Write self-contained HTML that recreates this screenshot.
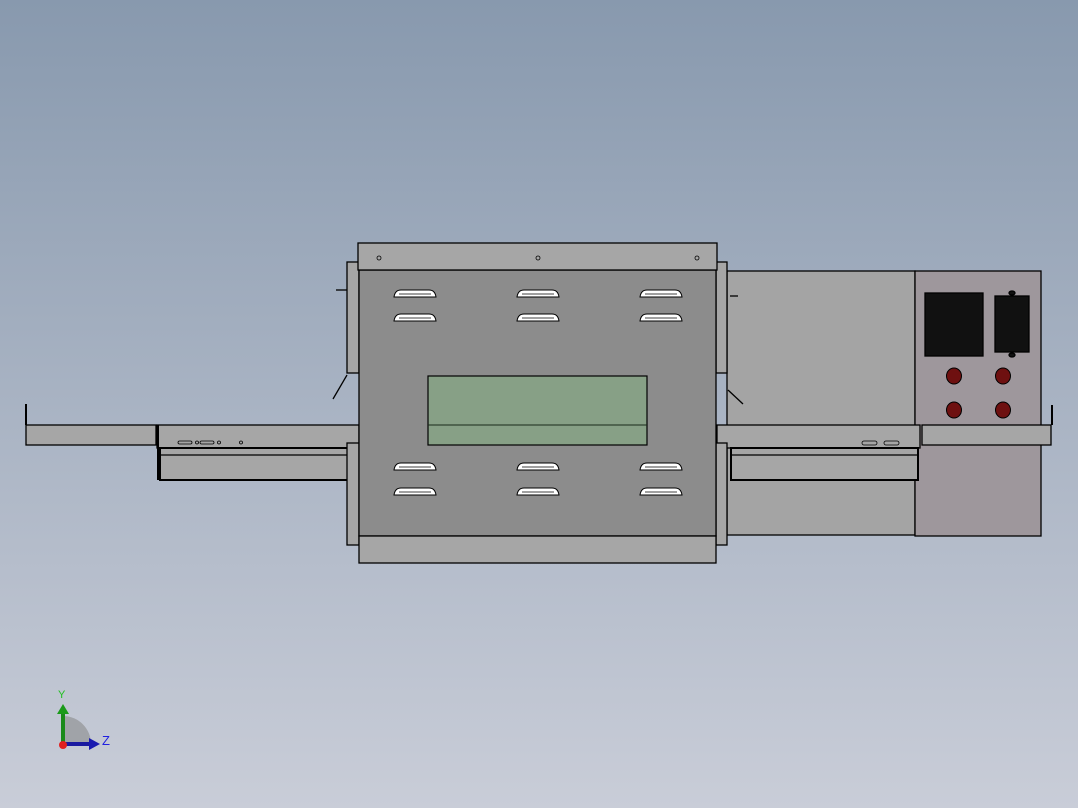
<!DOCTYPE html><html><head><style>body{margin:0}svg{display:block}</style></head><body>
<svg width="1078" height="808" xmlns="http://www.w3.org/2000/svg" font-family="Liberation Sans, sans-serif">
<defs><linearGradient id="bg" x1="0" y1="0" x2="0" y2="1"><stop offset="0" stop-color="#8899ae"/><stop offset="1" stop-color="#c9cdd8"/></linearGradient>
<g id="slot"><path d="M-21 4 Q-20 -3 -14 -3 L14 -3 Q20 -3 21 4 Z" fill="#fff" stroke="#000" stroke-width="1"/><line x1="-16" y1="1" x2="16" y2="1" stroke="#000" stroke-width="0.7"/></g></defs>
<rect width="1078" height="808" fill="url(#bg)"/>
<g stroke="#000" stroke-width="1.3">
<!-- right body -->
<rect x="727" y="271" width="188" height="264" fill="#a4a4a4"/>
<rect x="915" y="271" width="126" height="265" fill="#9e979c"/>
<rect x="925" y="293" width="58" height="63" fill="#111"/>
<rect x="995" y="296" width="34" height="56" fill="#111"/>
<ellipse cx="1012" cy="293" rx="3" ry="2" fill="#111"/><ellipse cx="1012" cy="355" rx="3" ry="2" fill="#111"/>
<g fill="#6e1010" stroke-width="1"><ellipse cx="954" cy="376" rx="7.5" ry="8"/><ellipse cx="1003" cy="376" rx="7.5" ry="8"/><ellipse cx="954" cy="410" rx="7.5" ry="8"/><ellipse cx="1003" cy="410" rx="7.5" ry="8"/></g>
<line x1="730" y1="296" x2="738" y2="296"/><polyline points="728,390 743,404" fill="none"/>
<rect x="717" y="425" width="203" height="23" fill="#a6a6a6"/>
<rect x="731" y="448" width="187" height="32" fill="#a6a6a6" stroke-width="2"/>
<line x1="731" y1="455" x2="918" y2="455"/>
<rect x="922" y="425" width="129" height="20" fill="#a6a6a6"/>
<line x1="1052" y1="405" x2="1052" y2="425" stroke-width="2"/>
<!-- left -->
<rect x="26" y="425" width="130" height="20" fill="#a6a6a6"/>
<line x1="26" y1="404" x2="26" y2="425" stroke-width="2"/>
<rect x="157" y="425" width="202" height="23" fill="#a6a6a6"/>
<rect x="160" y="448" width="192" height="32" fill="#a6a6a6" stroke-width="2"/>
<line x1="160" y1="455" x2="352" y2="455"/>
<line x1="158" y1="425" x2="158" y2="480" stroke-width="2"/>
<line x1="336" y1="290" x2="347" y2="290"/><polyline points="347,375 333,399" fill="none"/>
<g fill="none" stroke-width="0.8"><rect x="178" y="441" width="14" height="3" rx="1.5"/><rect x="200" y="441" width="14" height="3" rx="1.5"/><circle cx="197" cy="442.5" r="1.5"/><circle cx="219" cy="442.5" r="1.5"/><circle cx="241" cy="442.5" r="1.5"/>
<rect x="862" y="441" width="15" height="4" rx="2"/><rect x="884" y="441" width="15" height="4" rx="2"/></g>
<!-- flanges -->
<rect x="347" y="262" width="12" height="111" fill="#a6a6a6"/><rect x="347" y="443" width="12" height="102" fill="#a6a6a6"/>
<rect x="716" y="262" width="11" height="111" fill="#a6a6a6"/><rect x="716" y="443" width="11" height="102" fill="#a6a6a6"/>
<!-- main -->
<rect x="359" y="270" width="357" height="266" fill="#8c8c8c"/>
<rect x="358" y="243" width="359" height="27" fill="#a6a6a6"/>
<rect x="359" y="536" width="357" height="27" fill="#a6a6a6"/>
<rect x="428" y="376" width="219" height="69" fill="#87a086" stroke-width="1.2"/>
<line x1="428" y1="425" x2="647" y2="425" stroke="#1a2a1a" stroke-width="1"/>
<g fill="none" stroke-width="0.8"><circle cx="379" cy="258" r="2"/><circle cx="538" cy="258" r="2"/><circle cx="697" cy="258" r="2"/></g>
</g>
<g>
<use href="#slot" x="415" y="293"/><use href="#slot" x="538" y="293"/><use href="#slot" x="661" y="293"/>
<use href="#slot" x="415" y="317"/><use href="#slot" x="538" y="317"/><use href="#slot" x="661" y="317"/>
<use href="#slot" x="415" y="466"/><use href="#slot" x="538" y="466"/><use href="#slot" x="661" y="466"/>
<use href="#slot" x="415" y="491"/><use href="#slot" x="538" y="491"/><use href="#slot" x="661" y="491"/>
</g>
<!-- triad -->
<path d="M63 744 L63 716 A28 28 0 0 1 91 744 Z" fill="#a0a3a8"/>
<rect x="61" y="712" width="4" height="32" fill="#1a8a1a"/><path d="M57 714 L63 704 L69 714 Z" fill="#1a9a1a"/>
<rect x="63" y="742" width="28" height="4" fill="#1a1aa0"/><path d="M89 738 L100 744 L89 750 Z" fill="#1a1ab0"/>
<circle cx="63" cy="745" r="4" fill="#e02020"/>
<text x="58" y="698" font-size="11" fill="#20c020">Y</text>
<text x="102" y="745" font-size="13" fill="#2020e0">Z</text>
</svg>
</body></html>
